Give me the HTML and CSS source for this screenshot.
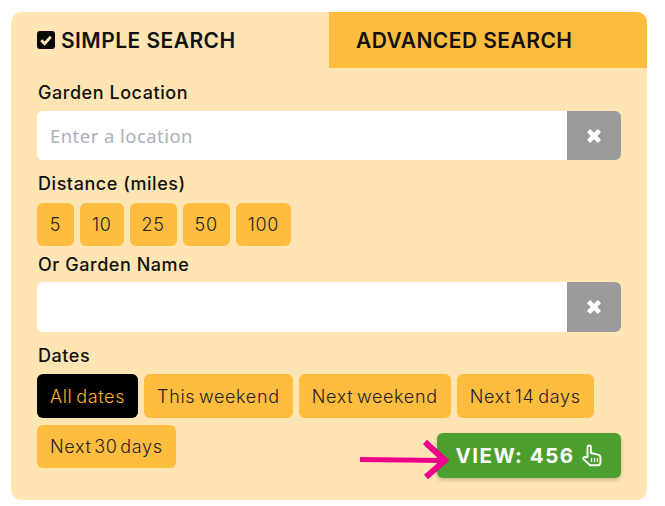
FILE: index.html
```html
<!DOCTYPE html>
<html lang="en">
<head>
<meta charset="utf-8">
<title>Garden search</title>
<link rel="stylesheet" href="styles.css">
</head>
<body>
<div class="card">
  <div class="tabs">
    <div class="tab tab-active">
      <svg class="check" viewBox="0 0 18 18" width="18" height="18"><rect x="0" y="0" width="18" height="18" rx="3" fill="#0b0b0b"/><path d="M4.2 9.2 L7.6 12.6 L13.8 5.8" fill="none" stroke="#ffe5b3" stroke-width="2.8"/></svg>
      <span>SIMPLE SEARCH</span>
    </div>
    <div class="tab tab-other">ADVANCED SEARCH</div>
  </div>
  <div class="body">
    <label class="label label-first">Garden Location</label>
    <div class="field">
      <div class="input placeholder">Enter a location</div>
      <div class="clear"><svg viewBox="0 0 14 14" width="18" height="18"><path d="M2.8 2.8 L11.2 11.2 M11.2 2.8 L2.8 11.2" stroke="#fff" stroke-width="3.6"/></svg></div>
    </div>
    <label class="label label-distance">Distance (miles)</label>
    <div class="chips">
      <span class="chip chip-sm">5</span><span class="chip chip-sm">10</span><span class="chip chip-sm">25</span><span class="chip chip-sm">50</span><span class="chip chip-sm">100</span>
    </div>
    <label class="label label-name">Or Garden Name</label>
    <div class="field field-tall">
      <div class="input"></div>
      <div class="clear"><svg viewBox="0 0 14 14" width="18" height="18"><path d="M2.8 2.8 L11.2 11.2 M11.2 2.8 L2.8 11.2" stroke="#fff" stroke-width="3.6"/></svg></div>
    </div>
    <label class="label label-dates">Dates</label>
    <div class="chips">
      <span class="chip chip-on">All dates</span><span class="chip">This weekend</span><span class="chip">Next weekend</span><span class="chip">Next 14 days</span>
    </div>
    <div class="last-row">
      <span class="chip chip-last">Next 30 days</span>
      <div class="view">
        <svg class="arrow" viewBox="0 0 90 40" width="90" height="40"><path d="M0 20.5 L84 21.5" stroke="#ec008c" stroke-width="5" fill="none"/><path d="M65 3 L85 21.5 L66 38" stroke="#ec008c" stroke-width="6" fill="none"/></svg>
        <button class="view-btn">VIEW: 456
          <svg class="hand" viewBox="0 0 22 24" width="22" height="24"><path d="M6.5 13 V3.2 a1.7 1.7 0 0 1 3.4 0 V9 l7 1.6 c1.6.4 2.6 1.4 2.6 3 v4.4 c0 1.4-.5 2.2-1.2 3.2 H9.2 L2.6 15.4 c-1.2-1.4 .8-3.2 2.2-2 Z" fill="none" stroke="#fff" stroke-width="1.9" stroke-linejoin="round"/><path d="M10.5 14 v4 M13.5 14 v4 M16.5 14 v4" stroke="#fff" stroke-width="1.3"/></svg>
        </button>
      </div>
    </div>
  </div>
</div>
</body>
</html>
```
FILE: styles.css
```css
* { box-sizing: border-box; }
html, body { margin: 0; padding: 0; background: #fff; }
body {
  padding: 12px 18px 6px 11px;
  font-family: "Inter", "Liberation Sans", sans-serif;
  color: #111;
}
.card {
  width: 636px;
  height: 488px;
  background: #ffe5b3;
  border-radius: 10px;
  overflow: hidden;
}
.tabs { display: flex; height: 56px; }
.tab {
  display: flex;
  align-items: center;
  font-size: 21px;
  font-weight: 600;
  letter-spacing: 0.45px;
  color: #111;
}
.tab-active { width: 318px; padding-left: 26px; gap: 6px; }
.tab-other { flex: 1; background: #ffbd3f; padding-left: 27px; }
.check { flex: none; }
.body { padding: 0 26px; }
.label {
  display: block;
  font-size: 18px;
  font-weight: 500;
  line-height: 22px;
  padding-left: 1px;
  letter-spacing: 0.55px;
  color: #111;
}
.label-first { margin-top: 14px; margin-bottom: 7px; }
.label-distance { margin-top: 13px; margin-bottom: 8px; }
.label-name { margin-top: 8px; margin-bottom: 6px; }
.label-dates { margin-top: 13px; margin-bottom: 7px; }
.field { display: flex; height: 49px; }
.field-tall { height: 50px; }
.input {
  flex: 1;
  background: #fff;
  border-radius: 6px 0 0 6px;
  padding-left: 13px;
  display: flex;
  align-items: center;
  font-family: "Noto Sans", sans-serif;
  font-size: 18.5px;
  letter-spacing: 0.45px;
}
.placeholder { color: #adb0ba; }
.clear {
  width: 54px;
  background: #9b9b9b;
  border-radius: 0 6px 6px 0;
  display: flex;
  align-items: center;
  justify-content: center;
}
.chips { display: flex; gap: 6px; }
.chip {
  display: flex;
  align-items: center;
  height: 44px;
  padding: 0 13px;
  background: #ffbd3f;
  border-radius: 6px;
  font-size: 18px;
  font-weight: 300;
  letter-spacing: 0.65px;
  word-spacing: -2px;
  color: #222;
  white-space: nowrap;
}
.chip-sm { height: 43px; padding: 0 12px; justify-content: center; min-width: 37px; }
.chip-on { background: #000; color: #ffae2e; }
.chip-last { height: 43px; word-spacing: -3px; }
.last-row {
  display: flex;
  justify-content: space-between;
  align-items: flex-start;
  margin-top: 7px;
}
.view { position: relative; margin-top: 8px; }
.view-btn {
  display: flex;
  align-items: center;
  justify-content: center;
  gap: 6px;
  width: 184px;
  height: 45px;
  border: 0;
  background: #4c9f2f;
  border-radius: 6px;
  box-shadow: 0 2px 4px rgba(0,0,0,.22);
  color: #fff;
  font-family: inherit;
  font-size: 20.5px;
  font-weight: 700;
  letter-spacing: 1.5px;
}
.hand { flex: none; }
.arrow { position: absolute; left: -77px; top: 6px; z-index: 1; }
```
